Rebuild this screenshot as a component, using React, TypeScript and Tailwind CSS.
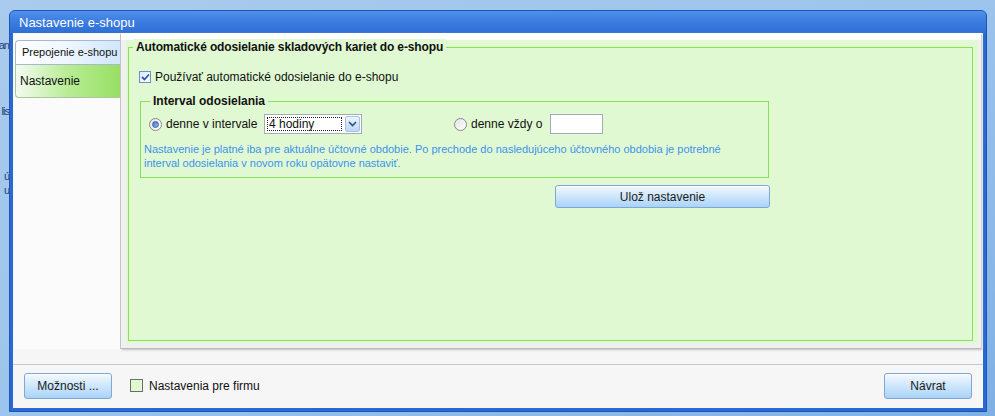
import React from 'react';

function Chevron() {
  return (
    <svg width="9" height="6" viewBox="0 0 9 6">
      <path d="M1 1 L4.5 4.5 L8 1" stroke="#2d4f8f" strokeWidth="1.6" fill="none" />
    </svg>
  );
}

function Radio({ checked }: { checked?: boolean }) {
  return (
    <div className="w-[13px] h-[13px] shrink-0 rounded-full border border-[#8a8a8a] bg-gradient-to-br from-[#e4e4e4] to-white flex items-center justify-center">
      {checked && (
        <div className="w-[7px] h-[7px] rounded-full bg-gradient-to-br from-[#4a70c8] to-[#9bb8ec] border border-[#3a5fb0]" />
      )}
    </div>
  );
}

function XpButton({ label, className }: { label: string; className: string }) {
  return (
    <div
      className={`flex items-center justify-center rounded-[3px] border border-[#7fa6d6] bg-gradient-to-b from-[#f4f9ff] via-[#cde6fb] to-[#a9d3f7] text-[12px] text-[#1a1a1a] shadow-[inset_0_1px_0_#ffffff] ${className}`}
    >
      {label}
    </div>
  );
}

export default function App() {
  return (
    <div
      className="w-[995px] h-[416px] overflow-hidden flex bg-gradient-to-br from-[#a9cbed] via-[#9cc4ec] to-[#7fb0e4] text-[#111]"
      style={{ fontFamily: '"Liberation Sans", Arial, sans-serif' }}
    >
      {/* desktop text peeking out on the left */}
      <div className="w-[9px] shrink-0 overflow-hidden flex flex-col items-end text-[11px] leading-[13px] tracking-[-1px] text-[#1c3f7a]">
        <div className="mt-[39px] whitespace-nowrap">an</div>
        <div className="mt-[53px] whitespace-nowrap">lis</div>
        <div className="mt-[52px] whitespace-nowrap">ú</div>
        <div className="mt-[1px] whitespace-nowrap">u</div>
      </div>

      {/* window */}
      <div className="mt-[10px] w-[978px] h-[402px] shrink-0 flex flex-col rounded-t-[6px] border border-[#1d55b8] bg-[#2a68d2]">
        {/* title bar */}
        <div className="h-[22px] shrink-0 flex items-center pl-[9px] pt-[1px] rounded-t-[5px] bg-gradient-to-b from-[#4f90ea] via-[#3a7ce0] to-[#2f6fd6] text-white text-[13px]">
          Nastavenie e-shopu
        </div>

        {/* body */}
        <div className="flex-1 mx-[3px] mb-[3px] flex flex-col bg-[#f6f6f6]">
          <div className="h-[316px] flex">
            {/* left tabs */}
            <div className="w-[107px] shrink-0 mt-[1px] ml-[1px] bg-[#fbfbfb] border-r border-[#c4c4c4] flex flex-col pt-[6px]">
              <div className="h-[25px] ml-[1px] flex items-center pl-[6px] whitespace-nowrap rounded-tl-[4px] border border-r-0 border-[#a9b9cc] bg-gradient-to-r from-white via-[#eef6ff] to-[#cfe6fc] text-[11px]">
                Prepojenie e-shopu
              </div>
              <div className="h-[33px] ml-[1px] flex items-center pl-[4px] rounded-bl-[4px] border border-t-0 border-r-0 border-[#a9c79a] bg-gradient-to-r from-[#f4fbef] via-[#b8ec94] to-[#98df63] text-[12px]">
                Nastavenie
              </div>
            </div>

            {/* right panel */}
            <div className="w-[860px] shrink-0 flex flex-col bg-[#f0f0f0] border-t-[7px] border-t-white border-b border-b-[#b9b9b9] shadow-[1px_1px_2px_#c0c0c0] pl-[5px] pr-[3px] pb-[5px]">
              <div className="flex-1 bg-[#e1f9d3] pt-[7px] pl-[2px] pr-[5px] pb-[2px] flex">
                <div className="flex-1 border border-[#86e356] relative flex flex-col pl-[10px]">
                  <div className="absolute -top-[9px] left-[4px] px-[3px] bg-[#e1f9d3] font-bold text-[12px] leading-[16px] tracking-[-0.12px]">
                    Automatické odosielanie skladových kariet do e-shopu
                  </div>

                  <div className="mt-[20px] flex items-center gap-[4px] text-[12px]">
                    <div className="w-[12px] h-[12px] border border-[#6c8fc8] bg-gradient-to-br from-[#dce8f8] to-white flex items-center justify-center">
                      <svg width="9" height="8" viewBox="0 0 9 8">
                        <path d="M1 4 L3.5 6.5 L8 1.5" stroke="#2b56b8" strokeWidth="1.8" fill="none" />
                      </svg>
                    </div>
                    <span>Používať automatické odosielanie do e-shopu</span>
                  </div>

                  <div className="mt-[15px] ml-[1px] w-[629px] h-[77px] border border-[#86e356] relative flex flex-col pl-[8px]">
                    <div className="absolute -top-[9px] left-[9px] px-[3px] bg-[#e1f9d3] font-bold text-[12px] leading-[16px]">
                      Interval odosielania
                    </div>
                    <div className="mt-[12px] flex items-center text-[12px]">
                      <Radio checked />
                      <span className="ml-[4px] w-[98px] whitespace-nowrap">denne v intervale</span>
                      <div className="w-[98px] h-[20px] flex border border-[#a5acb5] bg-white">
                        <div className="flex-1 m-[2px] border border-dotted border-[#222] flex items-center pl-[1px]">
                          4 hodiny
                        </div>
                        <div className="w-[15px] m-[1px] rounded-[2px] border border-[#a8c3ea] bg-gradient-to-b from-[#eef5ff] to-[#bcd6f7] flex items-center justify-center">
                          <Chevron />
                        </div>
                      </div>
                      <div className="ml-[92px]">
                        <Radio />
                      </div>
                      <span className="ml-[4px] w-[79px] whitespace-nowrap">denne vždy o</span>
                      <div className="w-[53px] h-[20px] border border-[#a5acb5] bg-white" />
                    </div>
                    <div className="mt-[8px] -ml-[5px] text-[11px] leading-[14px] text-[#3a93ec]">
                      Nastavenie je platné iba pre aktuálne účtovné obdobie. Po prechode do nasledujúceho účtovného obdobia je potrebné
                      <br />
                      interval odosielania v novom roku opätovne nastaviť.
                    </div>
                  </div>

                  <div className="mt-[7px] ml-[416px]">
                    <XpButton label="Ulož nastavenie" className="w-[215px] h-[23px]" />
                  </div>
                </div>
              </div>
            </div>
          </div>

          {/* bottom bar */}
          <div className="mt-[15px] flex-1 border-t border-[#c9c9c9] flex items-center px-[11px] pb-[2px]">
            <XpButton label="Možnosti ..." className="w-[88px] h-[26px]" />
            <div className="ml-[18px] w-[13px] h-[13px] border border-[#6d6d6d] bg-[#e1f9d3]" />
            <span className="ml-[6px] text-[12px]">Nastavenia pre firmu</span>
            <div className="flex-1" />
            <XpButton label="Návrat" className="w-[88px] h-[26px]" />
          </div>
        </div>
      </div>
    </div>
  );
}
